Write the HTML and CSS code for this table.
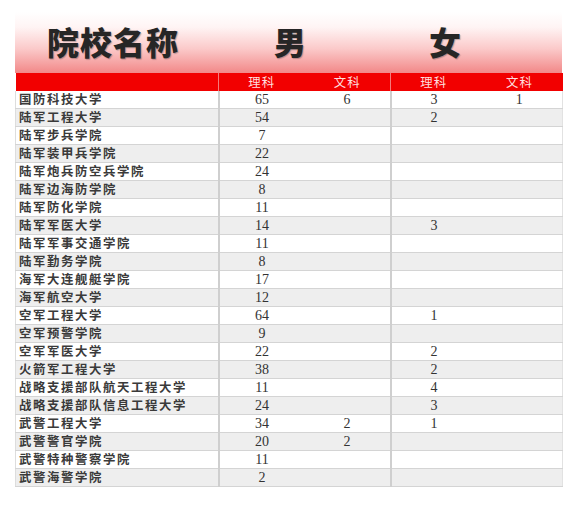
FILE: index.html
```html
<!DOCTYPE html>
<html lang="zh">
<head>
<meta charset="utf-8">
<link rel="stylesheet" href="styles.css">
</head>
<body>
<div class="sheet">
  <div class="banner">
    <span class="t-name">院校名称</span>
    <span class="t-m">男</span>
    <span class="t-f">女</span>
  </div>
  <table class="grid">
    <colgroup>
      <col class="c-name"><col class="c-n"><col class="c-n"><col class="c-n"><col class="c-n">
    </colgroup>
    <thead>
      <tr class="hd"><th></th><th class="sep">理科</th><th>文科</th><th class="sep">理科</th><th>文科</th></tr>
    </thead>
    <tbody>
      <tr><td>国防科技大学</td><td class="sep">65</td><td>6</td><td class="sep">3</td><td>1</td></tr>
      <tr><td>陆军工程大学</td><td class="sep">54</td><td></td><td class="sep">2</td><td></td></tr>
      <tr><td>陆军步兵学院</td><td class="sep">7</td><td></td><td class="sep"></td><td></td></tr>
      <tr><td>陆军装甲兵学院</td><td class="sep">22</td><td></td><td class="sep"></td><td></td></tr>
      <tr><td>陆军炮兵防空兵学院</td><td class="sep">24</td><td></td><td class="sep"></td><td></td></tr>
      <tr><td>陆军边海防学院</td><td class="sep">8</td><td></td><td class="sep"></td><td></td></tr>
      <tr><td>陆军防化学院</td><td class="sep">11</td><td></td><td class="sep"></td><td></td></tr>
      <tr><td>陆军军医大学</td><td class="sep">14</td><td></td><td class="sep">3</td><td></td></tr>
      <tr><td>陆军军事交通学院</td><td class="sep">11</td><td></td><td class="sep"></td><td></td></tr>
      <tr><td>陆军勤务学院</td><td class="sep">8</td><td></td><td class="sep"></td><td></td></tr>
      <tr><td>海军大连舰艇学院</td><td class="sep">17</td><td></td><td class="sep"></td><td></td></tr>
      <tr><td>海军航空大学</td><td class="sep">12</td><td></td><td class="sep"></td><td></td></tr>
      <tr><td>空军工程大学</td><td class="sep">64</td><td></td><td class="sep">1</td><td></td></tr>
      <tr><td>空军预警学院</td><td class="sep">9</td><td></td><td class="sep"></td><td></td></tr>
      <tr><td>空军军医大学</td><td class="sep">22</td><td></td><td class="sep">2</td><td></td></tr>
      <tr><td>火箭军工程大学</td><td class="sep">38</td><td></td><td class="sep">2</td><td></td></tr>
      <tr><td>战略支援部队航天工程大学</td><td class="sep">11</td><td></td><td class="sep">4</td><td></td></tr>
      <tr><td>战略支援部队信息工程大学</td><td class="sep">24</td><td></td><td class="sep">3</td><td></td></tr>
      <tr><td>武警工程大学</td><td class="sep">34</td><td>2</td><td class="sep">1</td><td></td></tr>
      <tr><td>武警警官学院</td><td class="sep">20</td><td>2</td><td class="sep"></td><td></td></tr>
      <tr><td>武警特种警察学院</td><td class="sep">11</td><td></td><td class="sep"></td><td></td></tr>
      <tr><td>武警海警学院</td><td class="sep">2</td><td></td><td class="sep"></td><td></td></tr>
    </tbody>
  </table>
</div>
</body>
</html>
```

FILE: styles.css
```css
html, body {
  margin: 0;
  padding: 0;
  background: #ffffff;
}
.sheet {
  margin: 12px 0 0 15px;
  width: 547px;
}
.banner {
  position: relative;
  height: 61px;
  background: linear-gradient(to bottom, #ffffff 0%, #fff4f4 25%, #fbcaca 60%, #f28888 100%);
  font-family: "Noto Sans CJK SC", "Liberation Sans", sans-serif;
  font-weight: 900;
  color: #262626;
  text-shadow: 1px 1px 1px rgba(0,0,0,0.25);
}
.banner span {
  position: absolute;
  top: 9px;
  font-size: 32px;
  line-height: 40px;
}
.t-name { left: 32px; letter-spacing: 1px; }
.t-m { left: 259px; }
.t-f { left: 414px; }
.grid {
  border-collapse: collapse;
  table-layout: fixed;
  width: 547px;
  font-family: "Liberation Serif", "Noto Sans CJK SC", serif;
  font-size: 14px;
  color: #333333;
}
.c-name { width: 203px; }
.c-n { width: 86px; }
.hd th {
  background: #f20000;
  color: #ffdede;
  font-weight: normal;
  font-family: "Noto Sans CJK SC", serif;
  font-size: 12.4px;
  letter-spacing: 1px;
  height: 18px;
  padding: 0;
  line-height: 18px;
}
.hd th.sep { border-left: 1px solid #f47a7a; }
tbody td {
  height: 17px;
  padding: 0;
  line-height: 17px;
  text-align: center;
  border-bottom: 1px solid #d4d4d4;
  white-space: nowrap;
}
tbody td:first-child {
  text-align: left;
  padding-left: 3px;
  font-family: "Noto Sans CJK SC", serif;
  font-size: 12.4px;
  letter-spacing: 1.6px;
  font-weight: 700;
  color: #3a3a3a;
  border-left: 1px solid #dddddd;
}
tbody td:last-child { border-right: 1px solid #e2e2e2; }
tbody td.sep { border-left: 2px solid #cfcfcf; }
tbody tr:nth-child(even) td { background: #eeeeee; }
tbody tr:nth-child(odd) td { background: #ffffff; }
```
